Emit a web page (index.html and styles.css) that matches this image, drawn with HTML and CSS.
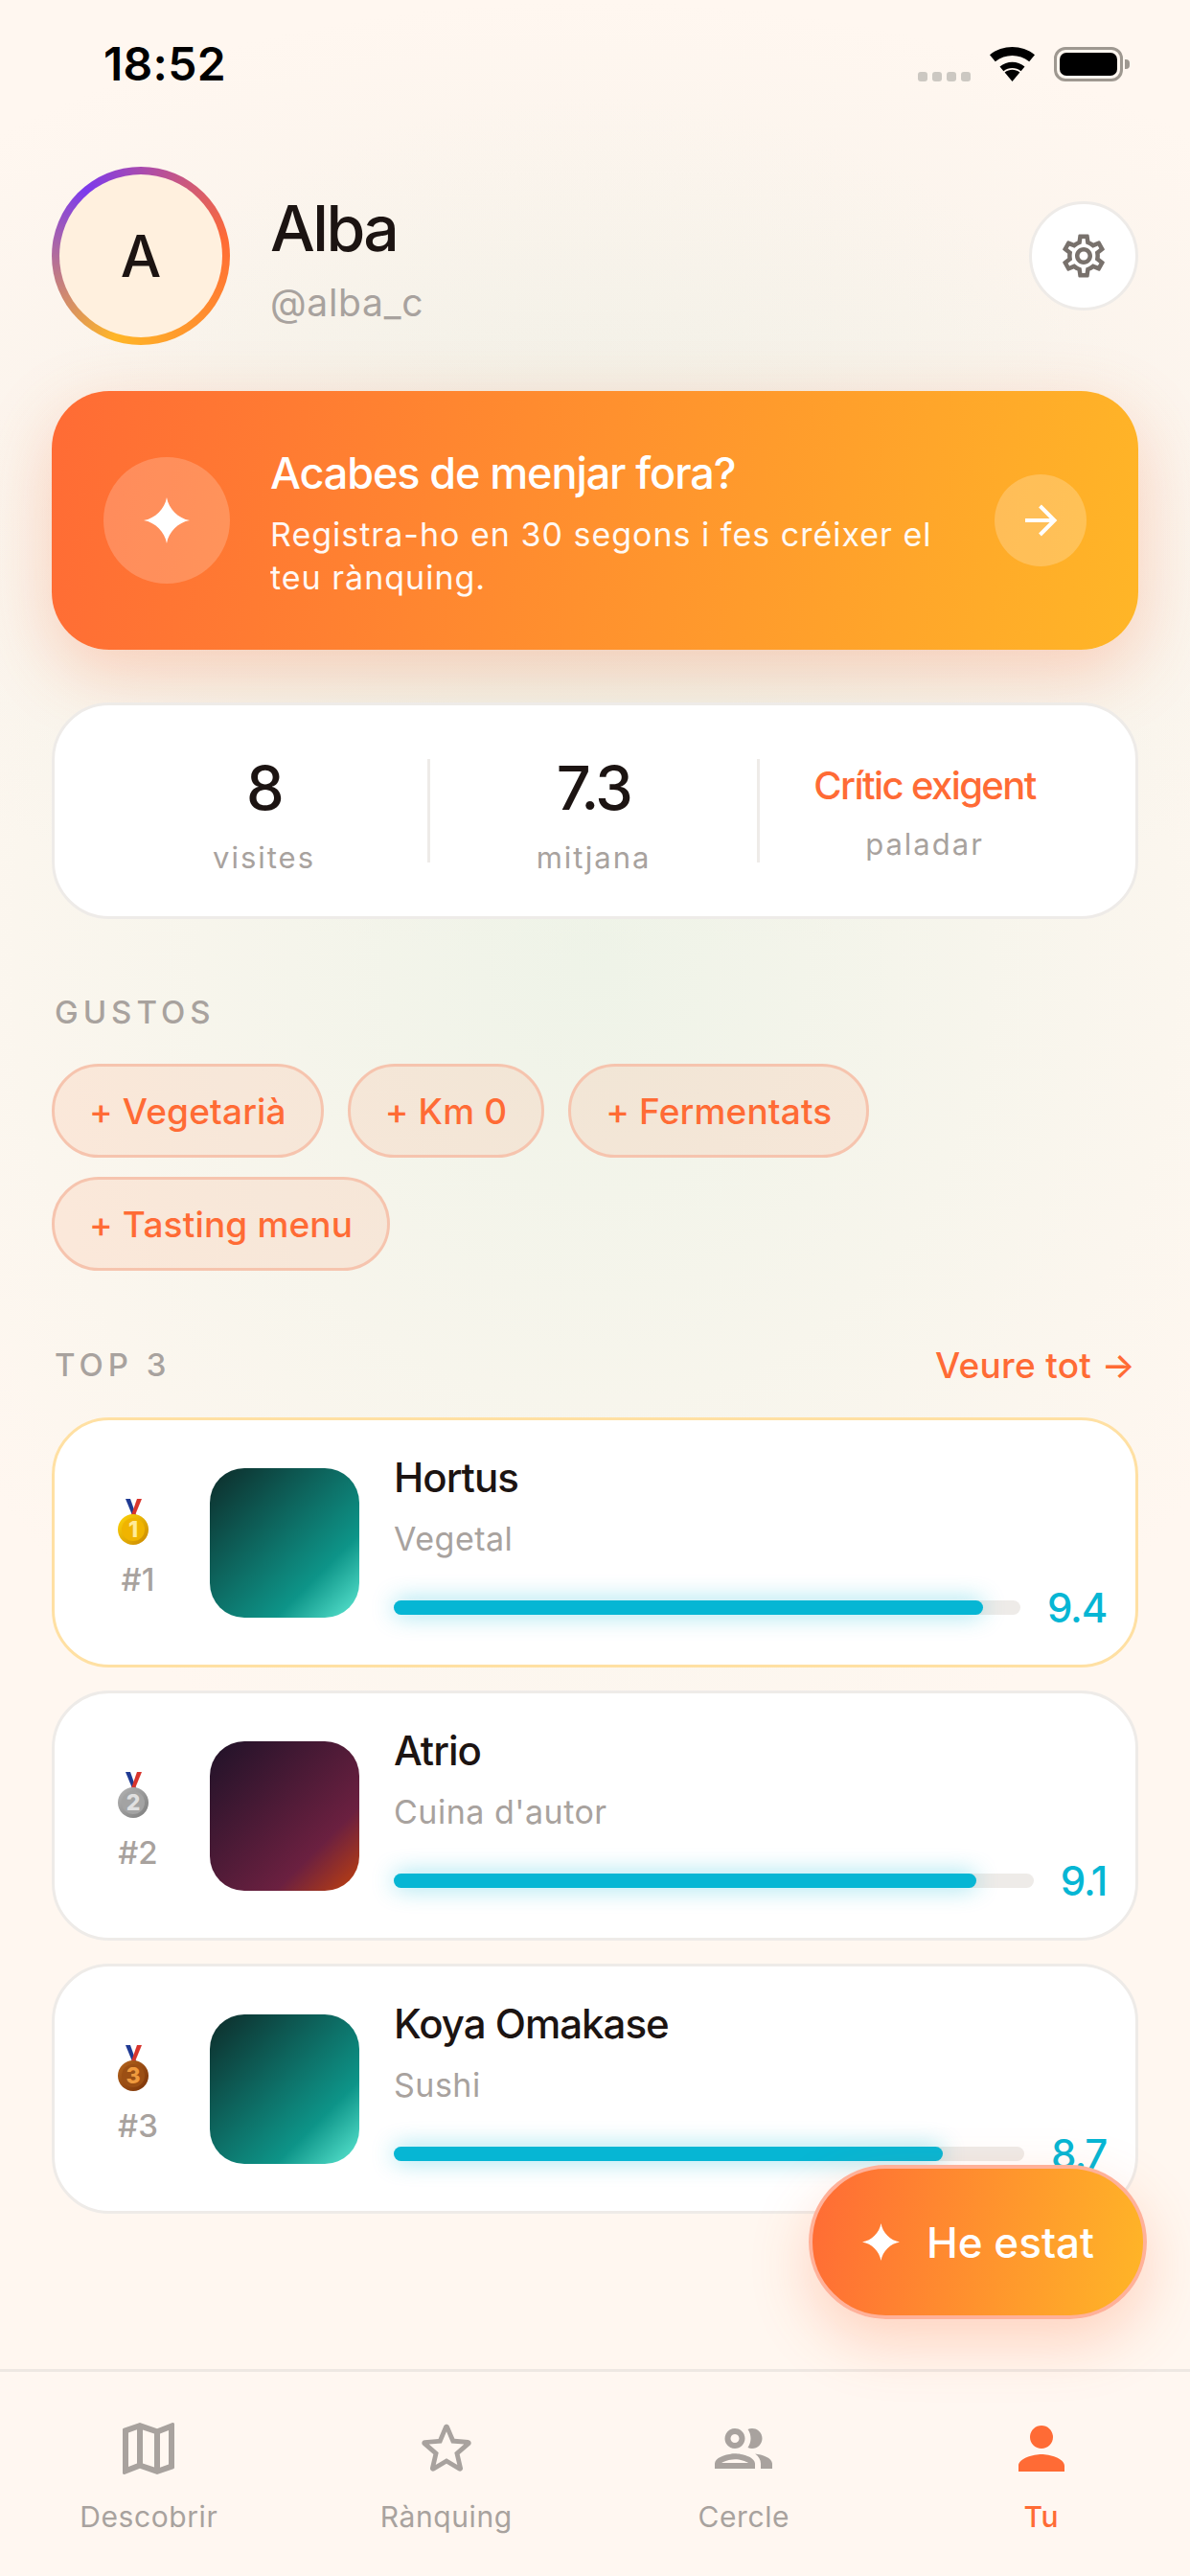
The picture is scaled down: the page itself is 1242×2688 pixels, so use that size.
FILE: index.html
```html
<!DOCTYPE html>
<html lang="ca">
<head>
    <meta charset="UTF-8">
    <meta name="viewport" content="width=device-width, initial-scale=1.0">
    <title>Alba</title>
    <link rel="stylesheet" href="styles.css">
</head>
<body>
<div class="screen">
    <!-- Status bar -->
    <div class="status-bar">
        <span class="clock">18:52</span>
        <div class="status-icons">
            <div class="signal"><i></i><i></i><i></i><i></i></div>
            <svg class="wifi" width="47" height="36" viewBox="0 0 47 36">
                <path d="M23.5 36 15.6 26.6C20.4 22.8 26.6 22.8 31.4 26.6Z" fill="#000"/>
                <path d="M10.5 20.5C18 14.2 29 14.2 36.5 20.5L32.6 25.2C27.2 20.8 19.8 20.8 14.4 25.2Z" fill="#000"/>
                <path d="M0 8.2C13.5 -2.7 33.5 -2.7 47 8.2L41.2 15.2C30.8 6.8 16.2 6.8 5.8 15.2Z" fill="#000"/>
            </svg>
            <div class="battery"><div class="battery-level"></div><div class="battery-nub"></div></div>
        </div>
    </div>

    <main class="content">
        <!-- Profile header -->
        <header class="profile">
            <div class="avatar-ring"><div class="avatar">A</div></div>
            <div class="profile-text">
                <h1>Alba</h1>
                <p>@alba_c</p>
            </div>
            <button class="settings-btn">
                <svg width="54" height="54" viewBox="0 0 24 24" fill="#78716c"><path d="M19.43 12.98c.04-.32.07-.64.07-.98 0-.34-.03-.66-.07-.98l2.11-1.65c.19-.15.24-.42.12-.64l-2-3.46c-.09-.16-.26-.25-.44-.25-.06 0-.12.01-.17.03l-2.49 1c-.52-.4-1.08-.73-1.69-.98l-.38-2.65C14.46 2.18 14.25 2 14 2h-4c-.25 0-.46.18-.49.42l-.38 2.65c-.61.25-1.17.59-1.69.98l-2.49-1c-.06-.02-.12-.03-.18-.03-.17 0-.34.09-.43.25l-2 3.46c-.13.22-.07.49.12.64l2.11 1.65c-.04.32-.07.65-.07.98 0 .33.03.66.07.98l-2.11 1.65c-.19.15-.24.42-.12.64l2 3.46c.09.16.26.25.44.25.06 0 .12-.01.17-.03l2.49-1c.52.4 1.08.73 1.69.98l.38 2.65c.03.24.24.42.49.42h4c.25 0 .46-.18.49-.42l.38-2.65c.61-.25 1.17-.59 1.69-.98l2.49 1c.06.02.12.03.18.03.17 0 .34-.09.43-.25l2-3.46c.12-.22.07-.49-.12-.64l-2.11-1.65zm-1.98-1.71c.04.31.05.52.05.73 0 .21-.02.43-.05.73l-.14 1.13.89.7 1.08.84-.7 1.21-1.27-.51-1.04-.42-.9.68c-.43.32-.84.56-1.25.73l-1.06.43-.16 1.13-.2 1.35h-1.4l-.19-1.35-.16-1.13-1.06-.43c-.43-.18-.83-.41-1.23-.71l-.91-.7-1.06.43-1.27.51-.7-1.21 1.08-.84.89-.7-.14-1.13c-.03-.31-.05-.54-.05-.74s.02-.43.05-.73l.14-1.13-.89-.7-1.08-.84.7-1.21 1.27.51 1.04.42.9-.68c.43-.32.84-.56 1.25-.73l1.06-.43.16-1.13.2-1.35h1.39l.19 1.35.16 1.13 1.06.43c.43.18.83.41 1.23.71l.91.7 1.06-.43 1.27-.51.7 1.21-1.07.85-.89.7.14 1.13zM12 8c-2.21 0-4 1.79-4 4s1.79 4 4 4 4-1.79 4-4-1.79-4-4-4zm0 6c-1.1 0-2-.9-2-2s.9-2 2-2 2 .9 2 2-.9 2-2 2z"/></svg>
            </button>
        </header>

        <!-- Call to action -->
        <section class="banner">
            <div class="banner-icon">
                <svg width="48" height="48" viewBox="0 0 48 48" fill="#fff"><path d="M24 0C26 12 36 22 48 24 36 26 26 36 24 48 22 36 12 26 0 24 12 22 22 12 24 0Z"/></svg>
            </div>
            <div class="banner-text">
                <h2>Acabes de menjar fora?</h2>
                <p>Registra-ho en 30 segons i fes créixer el teu rànquing.</p>
            </div>
            <div class="banner-arrow">
                <svg width="36" height="36" viewBox="0 0 36 36" fill="none" stroke="#fff" stroke-width="4"><path d="M2 18H32M17.500 3 32.500 18 17.500 33"/></svg>
            </div>
        </section>

        <!-- Stats -->
        <section class="stats">
            <div class="stat">
                <div class="stat-value">8</div>
                <div class="stat-label">visites</div>
            </div>
            <div class="stat">
                <div class="stat-value">7.3</div>
                <div class="stat-label">mitjana</div>
            </div>
            <div class="stat">
                <div class="stat-value stat-value-text">Crític exigent</div>
                <div class="stat-label">paladar</div>
            </div>
        </section>

        <!-- Tastes -->
        <h3 class="section-title gustos-title">GUSTOS</h3>
        <div class="chips">
            <span class="chip">+ Vegetarià</span>
            <span class="chip">+ Km 0</span>
            <span class="chip">+ Fermentats</span>
            <span class="chip">+ Tasting menu</span>
        </div>

        <!-- Top 3 -->
        <div class="section-head">
            <h3 class="section-title">TOP 3</h3>
            <a class="see-all">Veure tot →</a>
        </div>
        <div class="top-list">
            <article class="top-card top-card-first">
                <div class="rank">
                    <svg class="medal" width="48" height="48" viewBox="0 0 48 48">
                        <defs><linearGradient id="gold" x1="0" y1="0" x2="1" y2="1"><stop offset="0" stop-color="#ffd60a"/><stop offset="1" stop-color="#c98600"/></linearGradient></defs>
                        <path d="M8 0h5l6 17h-4z" fill="#1f3a93"/><path d="M25 0h-5l-6 17h4z" fill="#d8342c"/><path d="M15 0h3l-1 8z" fill="#fff"/>
                        <circle cx="16" cy="32" r="16" fill="url(#gold)"/><circle cx="16" cy="32" r="12" fill="#f0b400"/>
                        <text x="16" y="40" text-anchor="middle" class="medal-num" fill="#ffeb99">1</text>
                    </svg>
                    <span>#1</span>
                </div>
                <div class="thumb thumb-green"></div>
                <div class="top-body">
                    <div class="top-name">Hortus</div>
                    <div class="top-type">Vegetal</div>
                    <div class="score-row">
                        <div class="track"><div class="fill" style="width: 94%"></div></div>
                        <div class="score">9.4</div>
                    </div>
                </div>
            </article>
            <article class="top-card">
                <div class="rank">
                    <svg class="medal" width="48" height="48" viewBox="0 0 48 48">
                        <defs><linearGradient id="silver" x1="0" y1="0" x2="1" y2="1"><stop offset="0" stop-color="#b5b5b5"/><stop offset="1" stop-color="#7d7d7d"/></linearGradient></defs>
                        <path d="M8 0h5l6 17h-4z" fill="#1f3a93"/><path d="M25 0h-5l-6 17h4z" fill="#d8342c"/><path d="M15 0h3l-1 8z" fill="#fff"/>
                        <circle cx="16" cy="32" r="16" fill="url(#silver)"/><circle cx="16" cy="32" r="12" fill="#a3a3a3"/>
                        <text x="16" y="40" text-anchor="middle" class="medal-num" fill="#e0e0e0">2</text>
                    </svg>
                    <span>#2</span>
                </div>
                <div class="thumb thumb-wine"></div>
                <div class="top-body">
                    <div class="top-name">Atrio</div>
                    <div class="top-type">Cuina d'autor</div>
                    <div class="score-row">
                        <div class="track"><div class="fill" style="width: 91%"></div></div>
                        <div class="score">9.1</div>
                    </div>
                </div>
            </article>
            <article class="top-card">
                <div class="rank">
                    <svg class="medal" width="48" height="48" viewBox="0 0 48 48">
                        <defs><linearGradient id="bronze" x1="0" y1="0" x2="1" y2="1"><stop offset="0" stop-color="#b5651d"/><stop offset="1" stop-color="#7a3208"/></linearGradient></defs>
                        <path d="M8 0h5l6 17h-4z" fill="#1f3a93"/><path d="M25 0h-5l-6 17h4z" fill="#d8342c"/><path d="M15 0h3l-1 8z" fill="#fff"/>
                        <circle cx="16" cy="32" r="16" fill="url(#bronze)"/><circle cx="16" cy="32" r="12" fill="#9c4f14"/>
                        <text x="16" y="40" text-anchor="middle" class="medal-num" fill="#f09a3e">3</text>
                    </svg>
                    <span>#3</span>
                </div>
                <div class="thumb thumb-green"></div>
                <div class="top-body">
                    <div class="top-name">Koya Omakase</div>
                    <div class="top-type">Sushi</div>
                    <div class="score-row">
                        <div class="track"><div class="fill" style="width: 87%"></div></div>
                        <div class="score">8.7</div>
                    </div>
                </div>
            </article>
        </div>
    </main>

    <!-- Floating button -->
    <button class="fab">
        <svg width="39" height="39" viewBox="0 0 48 48" fill="#fff"><path d="M24 0C26 12 36 22 48 24 36 26 26 36 24 48 22 36 12 26 0 24 12 22 22 12 24 0Z"/></svg>
        He estat
    </button>

    <!-- Tab bar -->
    <nav class="tabs">
        <div class="tab">
            <svg width="72" height="72" viewBox="0 0 24 24" fill="currentColor"><path d="M20.5 3l-.16.03L15 5.1 9 3 3.36 4.9c-.21.07-.36.25-.36.48V20.500c0 .28.22.5.5.5l.16-.03L9 18.900l6 2.100 5.640-1.900c.21-.07.36-.25.36-.48V3.500c0-.28-.22-.5-.5-.5zM10 5.470l4 1.400v11.660l-4-1.400V5.470zm-5 .99l3-1.010v11.700l-3 1.160V6.460zm14 11.080l-3 1.010V6.860l3-1.160v11.840z"/></svg>
            <span>Descobrir</span>
        </div>
        <div class="tab">
            <svg width="72" height="72" viewBox="0 0 24 24" fill="currentColor"><path d="M19.650 9.040l-4.840-.42-1.890-4.450c-.34-.81-1.500-.81-1.840 0L9.190 8.630l-4.840.42c-.88.07-1.240 1.170-.57 1.750l3.670 3.180-1.100 4.720c-.2.86.73 1.540 1.490 1.080l4.160-2.500 4.160 2.510c.76.46 1.690-.22 1.490-1.080l-1.100-4.730 3.670-3.180c.67-.58.32-1.680-.57-1.750zM12 15.400l-3.760 2.270 1-4.280-3.320-2.880 4.380-.38L12 6.100l1.710 4.040 4.380.38-3.320 2.880 1 4.280L12 15.400z"/></svg>
            <span>Rànquing</span>
        </div>
        <div class="tab">
            <svg width="72" height="72" viewBox="0 0 24 24" fill="currentColor"><path d="M9 13.750c-2.340 0-7 1.170-7 3.500V19h14v-1.750c0-2.330-4.660-3.500-7-3.500zM4.340 17c.84-.58 2.870-1.250 4.660-1.250s3.820.67 4.660 1.250H4.340zM9 12c1.930 0 3.500-1.570 3.500-3.500S10.930 5 9 5 5.500 6.570 5.500 8.500 7.070 12 9 12zm0-5c.83 0 1.500.67 1.500 1.500S9.830 10 9 10s-1.500-.67-1.500-1.500S8.170 7 9 7zm7.040 6.810c1.160.84 1.960 1.960 1.960 3.440V19h4v-1.750c0-2.020-3.500-3.170-5.960-3.440zM15 12c1.930 0 3.500-1.570 3.500-3.500S16.930 5 15 5c-.54 0-1.040.13-1.500.35.63.89 1 1.980 1 3.150s-.37 2.260-1 3.150c.46.22.96.35 1.500.35z"/></svg>
            <span>Cercle</span>
        </div>
        <div class="tab tab-active">
            <svg width="72" height="72" viewBox="0 0 24 24" fill="currentColor"><path d="M12 12c2.210 0 4-1.790 4-4s-1.790-4-4-4-4 1.790-4 4 1.790 4 4 4zm0 2c-2.670 0-8 1.340-8 4v2h16v-2c0-2.660-5.330-4-8-4z"/></svg>
            <span>Tu</span>
        </div>
    </nav>
</div>
</body>
</html>
```

FILE: styles.css
```css
* {
    box-sizing: border-box;
}
body {
    margin: 0;
    font-family: Inter, "Noto Sans", sans-serif;
    color: #1c1412;
}
h1, h2, h3, p {
    margin: 0;
    font-weight: inherit;
}
button {
    font-family: inherit;
    border: none;
}
.screen {
    position: relative;
    width: 1242px;
    height: 2688px;
    overflow: hidden;
    display: flex;
    flex-direction: column;
    background:
        radial-gradient(ellipse 800px 900px at 620px 1000px, rgba(225, 240, 225, 0.55), rgba(225, 240, 225, 0) 100%),
        radial-gradient(ellipse 900px 500px at 620px 500px, rgba(235, 232, 222, 0.5), rgba(235, 232, 222, 0) 100%),
        #fff7f0;
}

/* status bar */
.status-bar {
    height: 134px;
    padding: 38px 70px 0 108px;
    display: flex;
    justify-content: space-between;
    align-items: flex-start;
    flex-shrink: 0;
}
.clock {
    font-size: 48px;
    font-weight: 600;
    line-height: 58px;
    letter-spacing: 0.3px;
    color: #000;
}
.status-icons {
    display: flex;
    align-items: flex-end;
    margin-top: 11px;
    height: 36px;
}
.signal {
    display: flex;
    gap: 5px;
    margin-right: 20px;
}
.signal i {
    width: 10px;
    height: 10px;
    border-radius: 3px;
    background: #ccc8c2;
}
.wifi {
    margin-right: 20px;
}
.battery {
    position: relative;
    width: 72px;
    height: 36px;
    border: 3px solid #9e9890;
    border-radius: 12px;
    padding: 3px;
}
.battery-level {
    height: 100%;
    background: #000;
    border-radius: 7px;
}
.battery-nub {
    position: absolute;
    right: -10px;
    top: 10px;
    width: 5px;
    height: 10px;
    background: #9e9890;
    border-radius: 0 4px 4px 0;
}

.content {
    flex: 1;
    padding: 40px 54px 0;
}

/* profile */
.profile {
    display: flex;
    align-items: center;
    height: 186px;
}
.avatar-ring {
    width: 186px;
    height: 186px;
    padding: 8px;
    border-radius: 50%;
    background: conic-gradient(from 320deg, #7c3aed, #ff6b35 33%, #ffb627 66%, #7c3aed);
    flex-shrink: 0;
}
.avatar {
    width: 100%;
    height: 100%;
    border-radius: 50%;
    background: #fff0de;
    display: flex;
    align-items: center;
    justify-content: center;
    font-size: 60px;
    font-weight: 500;
}
.profile-text {
    flex: 1;
    padding-left: 42px;
}
.profile-text h1 {
    font-size: 66px;
    font-weight: 500;
    line-height: 80px;
    letter-spacing: -2.5px;
    margin-top: 4px;
}
.profile-text p {
    font-size: 39px;
    line-height: 48px;
    letter-spacing: 0.7px;
    color: #a8a29e;
    margin-top: 14px;
}
.settings-btn {
    width: 114px;
    height: 114px;
    border-radius: 50%;
    background: #fff;
    border: 3px solid #eeebe8;
    display: flex;
    align-items: center;
    justify-content: center;
    padding: 0;
}

/* banner */
.banner {
    margin-top: 48px;
    height: 270px;
    border-radius: 60px;
    background: linear-gradient(100deg, #ff6b35, #ffb627);
    box-shadow: 0 24px 72px rgba(255, 107, 53, 0.28);
    padding: 0 54px;
    display: flex;
    align-items: center;
    color: #fff;
}
.banner-icon {
    width: 132px;
    height: 132px;
    border-radius: 50%;
    background: rgba(255, 255, 255, 0.2);
    display: flex;
    align-items: center;
    justify-content: center;
    flex-shrink: 0;
}
.banner-text {
    flex: 1;
    padding: 4px 60px 0 42px;
}
.banner-text h2 {
    font-size: 45px;
    font-weight: 500;
    line-height: 56px;
    letter-spacing: -1.1px;
}
.banner-text p {
    font-size: 34px;
    line-height: 45px;
    margin-top: 13px;
    letter-spacing: 1px;
    opacity: 0.95;
}
.banner-arrow {
    width: 96px;
    height: 96px;
    border-radius: 50%;
    background: rgba(255, 255, 255, 0.22);
    display: flex;
    align-items: center;
    justify-content: center;
    flex-shrink: 0;
}

/* stats */
.stats {
    margin-top: 55px;
    padding: 56px 48px;
    background: #fff;
    border: 3px solid #eeebe8;
    border-radius: 60px;
    display: grid;
    grid-template-columns: repeat(3, 1fr);
}
.stat {
    height: 108px;
    text-align: center;
    border-right: 3px solid #eeebe8;
}
.stat:last-child {
    border-right: none;
}
.stat-value {
    font-size: 63px;
    font-weight: 500;
    line-height: 61px;
    letter-spacing: -2.5px;
}
.stat-value-text {
    font-size: 40px;
    line-height: 47px;
    padding-top: 4px;
    height: 47px;
    letter-spacing: -1.6px;
    color: #ff6b35;
}
.stat-label {
    font-size: 31px;
    line-height: 38px;
    margin-top: 23px;
    color: #a8a29e;
    letter-spacing: 2px;
}

/* section headings */
.section-title {
    font-size: 33px;
    font-weight: 500;
    line-height: 40px;
    letter-spacing: 5px;
    color: #a8a29e;
}
.gustos-title {
    margin-top: 77px;
    padding-left: 3px;
}
.chips {
    margin-top: 34px;
    display: flex;
    flex-wrap: wrap;
    gap: 20px 25px;
}
.chip {
    height: 98px;
    padding: 0 36px;
    display: inline-flex;
    align-items: center;
    border-radius: 49px;
    border: 3px solid #f6c4ae;
    background: rgba(255, 107, 53, 0.1);
    color: #ff6b35;
    font-size: 37px;
    font-weight: 500;
    letter-spacing: 0.15px;
}
.section-head {
    margin-top: 74px;
    height: 48px;
    padding: 0 3px;
    display: flex;
    justify-content: space-between;
    align-items: center;
}
.see-all {
    font-size: 37px;
    font-weight: 500;
    letter-spacing: 0.3px;
    color: #ff6b35;
}

/* top list */
.top-list {
    margin-top: 31px;
    display: flex;
    flex-direction: column;
    gap: 24px;
}
.top-card {
    display: flex;
    align-items: center;
    padding: 35px 30px;
    background: #fff;
    border: 3px solid #eeebe8;
    border-radius: 60px;
}
.top-card-first {
    border-color: #ffe0a3;
}
.rank {
    width: 114px;
    margin-right: 18px;
    padding-top: 12px;
    display: flex;
    flex-direction: column;
    align-items: center;
    font-size: 33px;
    font-weight: 500;
    line-height: 40px;
    color: #a8a29e;
}
.medal {
    margin-bottom: 16px;
    margin-left: 6px;
    flex-shrink: 0;
}
.medal-num {
    font-size: 23px;
    font-weight: 800;
}
.thumb {
    width: 156px;
    height: 156px;
    border-radius: 36px;
    flex-shrink: 0;
}
.thumb-green {
    background: linear-gradient(135deg, #0d2b29 0%, #0d9488 72%, #5eead4 100%);
}
.thumb-wine {
    background: linear-gradient(135deg, #1f1228 0%, #6b2040 72%, #c2410c 100%);
}
.top-body {
    flex: 1;
    margin-left: 36px;
}
.top-name {
    font-size: 42px;
    font-weight: 500;
    line-height: 50px;
    letter-spacing: -1px;
}
.top-type {
    font-size: 34px;
    line-height: 42px;
    margin-top: 18px;
    color: #a8a29e;
    letter-spacing: 0.5px;
}
.score-row {
    display: flex;
    align-items: center;
    gap: 28px;
    height: 50px;
    margin-top: 25px;
}
.track {
    flex: 1;
    height: 15px;
    border-radius: 8px;
    background: #eeebe8;
}
.fill {
    height: 100%;
    border-radius: 8px;
    background: #06b6d4;
    box-shadow: 0 0 24px rgba(6, 182, 212, 0.45);
}
.score {
    font-size: 42px;
    font-weight: 500;
    letter-spacing: -1.2px;
    color: #06b6d4;
}

/* floating button */
.fab {
    position: absolute;
    right: 45px;
    top: 2259px;
    width: 353px;
    height: 161px;
    border-radius: 81px;
    border: 4px solid #ffb199;
    background: linear-gradient(100deg, #ff6b35, #ffb627);
    box-shadow: 0 24px 60px rgba(255, 107, 53, 0.25);
    display: flex;
    align-items: center;
    padding: 0 0 0 52px;
    gap: 28px;
    color: #fff;
    font-size: 44px;
    font-weight: 500;
}

/* tab bar */
.tabs {
    height: 216px;
    flex-shrink: 0;
    border-top: 3px solid #eee8e3;
    background: #fff7f1;
    display: grid;
    grid-template-columns: repeat(4, 1fr);
    padding-top: 44px;
}
.tab {
    display: flex;
    flex-direction: column;
    align-items: center;
    color: #a8a29e;
    font-size: 30px;
    line-height: 38px;
    letter-spacing: 0.6px;
}
.tab span {
    margin-top: 16px;
}
.tab-active {
    color: #ff6b35;
    font-weight: 500;
}
```
